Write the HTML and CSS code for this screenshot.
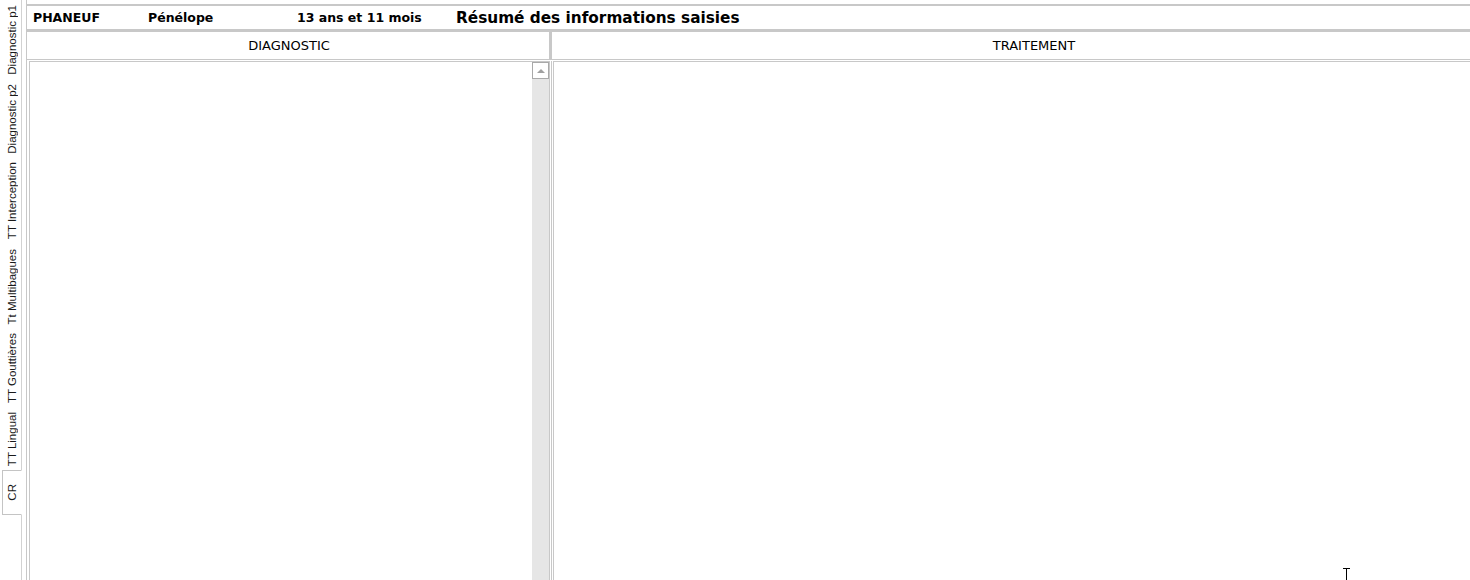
FILE: index.html
```html
<!DOCTYPE html>
<html lang="fr">
<head>
<meta charset="utf-8">
<title>Résumé des informations saisies</title>
<link rel="stylesheet" href="styles.css">
</head>
<body>
<div class="app">
  <nav class="tabs">
    <div class="tab"><span class="tab-label">Diagnostic p1</span></div>
    <div class="tab"><span class="tab-label">Diagnostic p2</span></div>
    <div class="tab"><span class="tab-label">TT Interception</span></div>
    <div class="tab"><span class="tab-label">Tt Multibagues</span></div>
    <div class="tab"><span class="tab-label">TT Gouttières</span></div>
    <div class="tab"><span class="tab-label">TT Lingual</span></div>
    <div class="tab tab-active"><span class="tab-label">CR</span></div>
  </nav>
  <main class="main">
    <header class="header">
      <span class="h-cell h-name">PHANEUF</span>
      <span class="h-cell h-first">Pénélope</span>
      <span class="h-cell h-age">13 ans et 11 mois</span>
      <span class="h-title">Résumé des informations saisies</span>
    </header>
    <div class="col-heads">
      <div class="col-head col-head-left">DIAGNOSTIC</div>
      <div class="col-head col-head-right">TRAITEMENT</div>
    </div>
    <div class="panels">
      <div class="panel-cell panel-cell-left">
        <div class="panel panel-left">
          <div class="panel-body"></div>
          <div class="scrollbar">
            <div class="scroll-btn"><span class="scroll-arrow"></span></div>
            <div class="scroll-track"></div>
          </div>
        </div>
      </div>
      <div class="panel-cell panel-cell-right">
        <div class="panel panel-right"></div>
      </div>
    </div>
  </main>
  <svg class="cursor" width="9" height="13" viewBox="0 0 9 13" aria-hidden="true">
    <path d="M1 0.5H8M4.5 0.5V12" stroke="#000" stroke-width="1" fill="none"/>
  </svg>
</div>
</body>
</html>
```

FILE: styles.css
```css
html, body {
  margin: 0;
  padding: 0;
  background: #ffffff;
}

body {
  font-family: "DejaVu Sans", Verdana, sans-serif;
  color: #000;
  width: 1470px;
  height: 580px;
  overflow: hidden;
}

.app {
  position: relative;
  display: flex;
  height: 580px;
}

/* vertical tab strip */
.tabs {
  width: 21px;
  flex: 0 0 21px;
  border-right: 1px solid #d2d2d2;
  display: flex;
  flex-direction: column;
  align-items: flex-end;
  box-sizing: content-box;
}

.tab {
  width: 18px;
  display: flex;
  justify-content: center;
  padding: 5px 0 4px 3px;
  font-family: "Liberation Sans", Arial, sans-serif;
  font-size: 11.5px;
  line-height: 13px;
  color: #1a1a1a;
}

.tab-label {
  writing-mode: vertical-rl;
  transform: rotate(180deg);
  white-space: nowrap;
}

.tab-active {
  width: 18px;
  margin-right: -1px;
  padding: 13px 0 13px 0;
  background: #fff;
  border: 1px solid #c4c4c4;
  border-right: 1px solid #fff;
  box-sizing: content-box;
}

/* main area */
.main {
  flex: 1;
  margin-left: 4px;
  border-left: 1px solid #c8c8c8;
  padding-top: 4px;
  display: flex;
  flex-direction: column;
  min-width: 0;
}

.header {
  height: 23px;
  border-top: 2px solid #c8c8c8;
  border-bottom: 3px solid #c8c8c8;
  display: grid;
  grid-template-columns: 121px 149px 159px auto;
  align-items: center;
  font-weight: bold;
  font-size: 12.5px;
}

.h-name {
  padding-left: 6px;
}

.h-title {
  font-size: 15.3px;
  padding-top: 1px;
}

.col-heads {
  display: grid;
  grid-template-columns: 525px 1fr;
  height: 27px;
  border-bottom: 1px solid #c8c8c8;
}

.col-head {
  display: flex;
  align-items: center;
  justify-content: center;
  font-size: 13px;
}

.col-head-left {
  border-right: 3px solid #c8c8c8;
  padding-left: 2px;
}

.col-head-right {
  padding-left: 46px;
}

.panels {
  flex: 1;
  display: grid;
  grid-template-columns: 525px 1fr;
  margin-top: 1px;
  min-height: 0;
}

.panel-cell-left {
  padding-left: 2px;
  padding-right: 1px;
  border-right: 1px solid #c8c8c8;
  display: flex;
}

.panel-cell-right {
  padding-left: 1px;
  display: flex;
}

.panel {
  flex: 1;
  border-top: 1px solid #c8c8c8;
  border-left: 1px solid #c8c8c8;
}

.panel-left {
  display: flex;
  border-right: 1px solid #c8c8c8;
}

.panel-body {
  flex: 1;
}

.scrollbar {
  width: 17px;
  display: flex;
  flex-direction: column;
}

.scroll-btn {
  height: 15px;
  border: 1px solid #a9a9a9;
  background: #fff;
  display: flex;
  align-items: center;
  justify-content: center;
}

.scroll-arrow {
  width: 0;
  height: 0;
  border-left: 4px solid transparent;
  border-right: 4px solid transparent;
  border-bottom: 4px solid #a0a0a0;
}

.scroll-track {
  flex: 1;
  background: #e6e6e6;
}

.cursor {
  position: absolute;
  left: 1342px;
  top: 568px;
}
```
